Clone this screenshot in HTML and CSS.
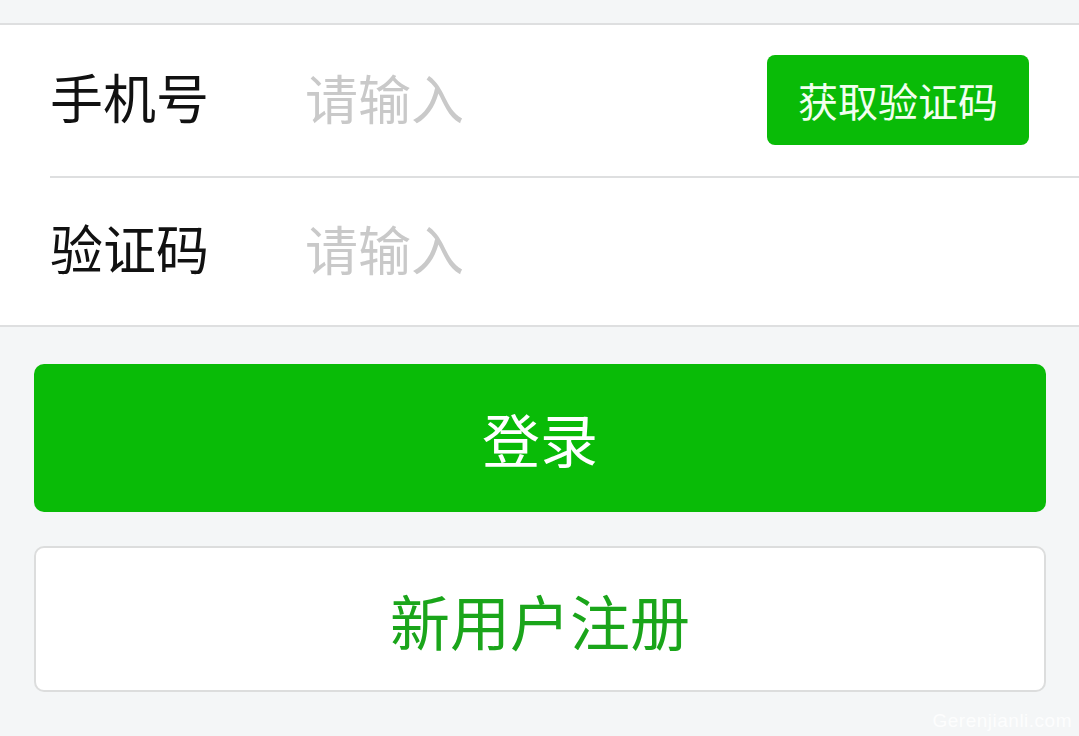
FILE: index.html
```html
<!DOCTYPE html>
<html lang="zh-CN">
<head>
  <meta charset="UTF-8" />
  <meta name="viewport" content="width=device-width, initial-scale=1.0" />
  <title>登录</title>
  <link rel="stylesheet" href="styles.css">
</head>
<body>
  <div class="form-panel">
    <div class="form-row">
      <label class="form-label">手机号</label>
      <input class="form-input" type="text" placeholder="请输入" />
      <button class="code-btn">获取验证码</button>
    </div>
    <div class="form-row">
      <label class="form-label">验证码</label>
      <input class="form-input" type="text" placeholder="请输入" />
    </div>
  </div>

  <div class="actions">
    <button class="btn btn-primary">登录</button>
    <button class="btn btn-default">新用户注册</button>
  </div>

  <div class="watermark">Gerenjianli.com</div>
</body>
</html>
```

FILE: styles.css
```css
* {
  margin: 0;
  padding: 0;
  box-sizing: border-box;
}
body {
  font-family: "Noto Sans CJK SC", "Noto Sans", sans-serif;
  background: #f4f6f7;
  color: #000;
  width: 1079px;
  height: 736px;
  overflow: hidden;
  padding-top: 23px;
  position: relative;
}
.form-panel {
  background: #fff;
  border-top: 2px solid #dedfe0;
  border-bottom: 2px solid #dedfe0;
  padding-left: 50px;
}
.form-row {
  height: 151px;
  display: flex;
  align-items: center;
  padding-right: 50px;
  padding-bottom: 8px;
}
.form-row + .form-row {
  border-top: 2px solid #dedfe0;
  height: 149px;
}
.form-label {
  flex-shrink: 0;
  width: 255px;
  font-size: 53px;
  line-height: 1;
  color: #111;
}
.form-input {
  flex: 1;
  min-width: 0;
  border: none;
  outline: none;
  background: transparent;
  font-family: inherit;
  font-size: 53px;
  color: #333;
}
.form-input::placeholder {
  color: #c9c9c9;
}
.code-btn {
  flex-shrink: 0;
  width: 262px;
  height: 90px;
  border: none;
  border-radius: 8px;
  background: #09bb07;
  color: #f2fff0;
  font-family: inherit;
  font-size: 40px;
  margin-top: 7px;
}
.actions {
  padding: 37px 33px 0 34px;
  display: flex;
  flex-direction: column;
  gap: 34px;
}
.btn {
  width: 100%;
  border-radius: 10px;
  font-family: inherit;
  font-size: 58px;
  cursor: pointer;
}
.btn-primary {
  height: 148px;
  border: none;
  background: #09bb07;
  color: #fff;
}
.btn-default {
  height: 146px;
  border: 2px solid #dcdddd;
  background: #fff;
  color: #1aa51a;
  font-size: 60px;
}
.watermark {
  position: absolute;
  right: 7px;
  bottom: 4px;
  font-family: "Liberation Sans", sans-serif;
  font-size: 19px;
  color: rgba(255, 255, 255, 0.85);
  letter-spacing: 0.5px;
}
```
